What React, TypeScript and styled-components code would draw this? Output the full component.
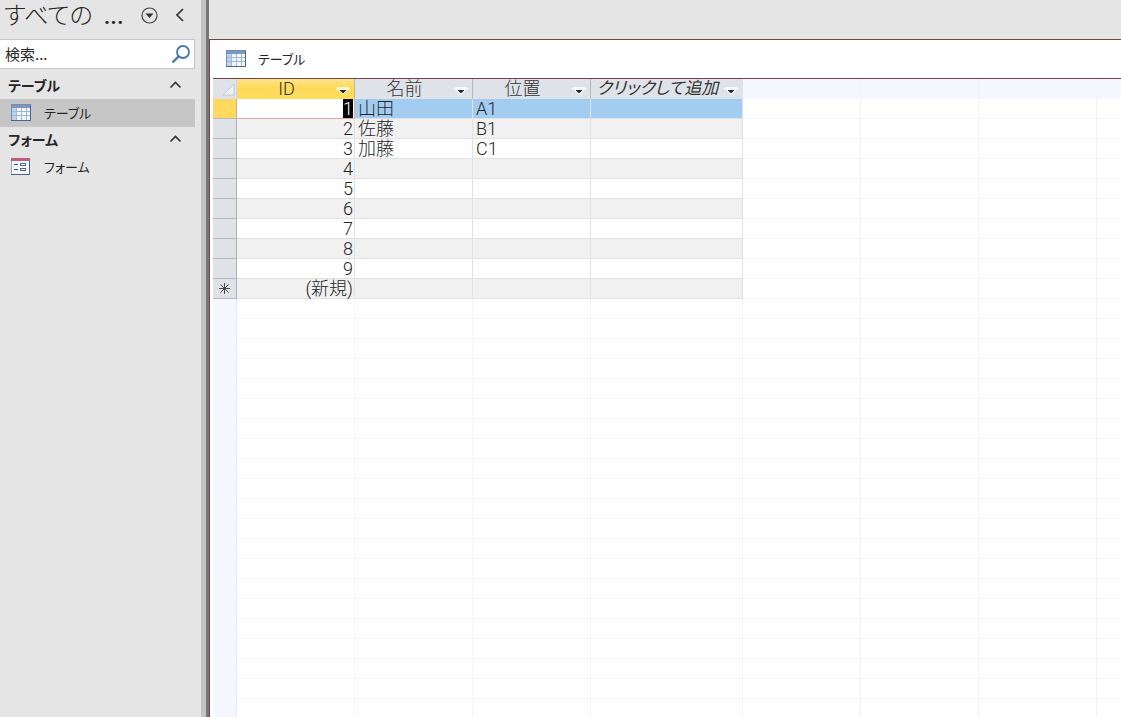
import React from "react";
import styled, { createGlobalStyle, css } from "styled-components";

const uiFont = `"Noto Sans CJK JP", sans-serif`;
const gridFont = `Roboto, "Noto Sans CJK JP", sans-serif`;

const GlobalStyle = createGlobalStyle`
  * { box-sizing: border-box; }
  body {
    margin: 0;
    background: #e5e5e5;
    color: #262626;
    font-family: ${uiFont};
    font-feature-settings: "palt";
  }
  button {
    border: 0;
    padding: 0;
    background: none;
    color: inherit;
    font: inherit;
    font-feature-settings: inherit;
    cursor: pointer;
  }
`;

const Window = styled.div`
  display: flex;
  height: 100vh;
  overflow: hidden;
`;

const Navigation = styled.nav`
  display: flex;
  flex-direction: column;
  flex: none;
  width: 201px;
  padding-right: 6px;
`;

const Splitter = styled.div`
  flex: none;
  width: 8px;
  background: #c3c3c3;
  border-right: 3px solid #777777;
`;

const NavHeader = styled.header`
  display: flex;
  align-items: flex-start;
  height: 39px;
  padding: 0 3px 0 4px;
`;

const NavTitle = styled.h1`
  flex: 1;
  margin: 0;
  font-family: ${gridFont};
  font-size: 24px;
  line-height: 33px;
  font-weight: 300;
  white-space: nowrap;
`;

const Ellipsis = styled.span`
  margin-left: 5px;
  font-weight: 500;
`;

const IconButton = styled.button`
  display: flex;
  align-items: center;
  justify-content: center;
  width: 24px;
  height: 24px;
  margin: 3px 0 0 7px;
`;

const SearchBox = styled.form`
  display: flex;
  align-items: center;
  height: 30px;
  margin-bottom: 4px;
  padding: 0 3px 0 5px;
  background: #ffffff;
  border: 1px solid #c6c6c6;
  border-left: 0;
`;

const SearchInput = styled.input`
  flex: 1;
  min-width: 0;
  padding: 0 0 2px;
  border: 0;
  outline: 0;
  background: none;
  color: #262626;
  font-family: ${uiFont};
  font-size: 15px;
  &::placeholder {
    color: #262626;
    opacity: 1;
  }
`;

const SearchButton = styled.button`
  display: flex;
`;

const GroupHeader = styled.button`
  display: flex;
  align-items: center;
  justify-content: space-between;
  height: 26px;
  padding: 0 13px 2px 8px;
  font-size: 14px;
  font-weight: 700;
`;

const NavItem = styled.a<{ $selected?: boolean }>`
  display: flex;
  align-items: center;
  gap: 13px;
  height: 28px;
  padding: 0 11px 1px;
  background: ${(p) => (p.$selected ? "#c6c6c6" : "transparent")};
  color: inherit;
  font-size: 13px;
  text-decoration: none;
`;

const Workspace = styled.main`
  display: flex;
  flex: 1;
  min-width: 0;
  padding-top: 39px;
`;

const Document = styled.section`
  display: flex;
  flex-direction: column;
  flex: 1;
  min-width: 0;
  padding-left: 3px;
  background: #ffffff;
  border-top: 1px solid #7c4347;
  border-left: 1px solid #7c4347;
`;

const DocumentTab = styled.h2`
  display: flex;
  align-items: center;
  flex: none;
  gap: 12px;
  height: 39px;
  margin: 0;
  padding: 0 0 2px 13px;
  border-bottom: 1px solid #7c4347;
  font-size: 13px;
  font-weight: 400;
`;

const Sheet = styled.div`
  display: flex;
  flex: 1;
  min-height: 0;
  overflow: hidden;
`;

const Records = styled.div`
  display: flex;
  flex-direction: column;
  flex: none;
  width: 530px;
`;

const Grid = styled.table`
  flex: none;
  width: 100%;
  table-layout: fixed;
  border-collapse: separate;
  border-spacing: 0;
  font-family: ${gridFont};
  font-size: 18px;
  line-height: 19px;
  font-weight: 300;
`;

const Column = styled.col<{ $width: number }>`
  width: ${(p) => p.$width}px;
`;

const HeaderCell = styled.th<{ $active?: boolean; $italic?: boolean }>`
  height: 20px;
  padding: 0;
  border-right: 1px solid #b4b9c0;
  background: ${(p) =>
    p.$active ? "linear-gradient(#ffe48c, #ffda58 45%, #ffdb62)" : "#dfe2e7"};
  color: #333333;
  font-weight: ${(p) => (p.$italic ? 400 : 300)};
  font-style: ${(p) => (p.$italic ? "italic" : "normal")};
  font-size: ${(p) => (p.$italic ? 17 : 18)}px;
  &:last-child { border-right-color: #dfe2e7; }
`;

const HeaderContent = styled.div`
  display: flex;
  align-items: flex-start;
  height: 20px;
  padding-right: 4px;
`;

const HeaderLabel = styled.span`
  flex: 1;
  text-align: center;
  white-space: nowrap;
`;

const MenuButton = styled.button`
  display: flex;
  flex: none;
  align-self: flex-end;
  padding-bottom: 5px;
`;

const Corner = styled.td`
  padding: 0 1px 3px 0;
  background: #dfe2e7;
  border-right: 1px solid #d3d6dc;
  text-align: right;
  vertical-align: bottom;
  line-height: 0;
`;

const RowSelector = styled.th<{ $active?: boolean }>`
  height: 20px;
  padding: 0;
  border-right: 1px solid #aeb3ba;
  border-bottom: 1px solid #b4b9c0;
  background: ${(p) => (p.$active ? "#ffd95f" : "#dfe2e7")};
  line-height: 0;
`;

const Cell = styled.td<{ $number?: boolean; $editing?: boolean }>`
  height: 20px;
  padding: 0 1px 0 3px;
  border-right: 1px solid #e0e2e4;
  border-bottom: 1px solid #e0e2e4;
  text-align: ${(p) => (p.$number ? "right" : "left")};
  white-space: nowrap;
  ${(p) =>
    p.$editing &&
    css`
      background: #ffffff;
      border-color: #e8a5a5;
      color: #ffffff;
    `}
`;

const SelectedText = styled.span`
  display: block;
  width: min-content;
  margin-left: auto;
  background: #000000;
`;

const Row = styled.tr<{ $shaded?: boolean; $active?: boolean }>`
  background: ${(p) => (p.$active ? "#a3cdf0" : p.$shaded ? "#f1f1f1" : "#ffffff")};
`;

const rowLines = css`
  background-image: repeating-linear-gradient(
    transparent 0 19px,
    #f5f5f7 19px 20px
  );
`;

const EmptyRows = styled.div`
  display: grid;
  grid-template-columns: 24px 118px 118px 118px 1fr;
  flex: 1;
`;

const EmptyColumn = styled.div<{ $gutter?: boolean }>`
  border-right: 1px solid ${(p) => (p.$gutter ? "#e6e8f0" : "#f5f5f7")};
  background-color: ${(p) => (p.$gutter ? "#f6f7fe" : "#ffffff")};
  ${rowLines}
`;

const EmptyColumns = styled.div`
  display: flex;
  flex-direction: column;
  flex: 1;
  min-width: 0;
`;

const columnLines = `repeating-linear-gradient(to right, transparent 0 117px, #f3f3f6 117px 118px)`;

const EmptyHeader = styled.div`
  flex: none;
  height: 20px;
  background: ${columnLines}, #f6f7fe;
`;

const EmptyCells = styled.div`
  flex: 1;
  background: ${columnLines},
    repeating-linear-gradient(transparent 0 19px, #f5f5f7 19px 20px);
`;

const TableIcon = () => (
  <svg width="20" height="17" viewBox="0 0 20 17" aria-hidden="true">
    <rect x="0.5" y="0.5" width="19" height="16" fill="#f4f8fd" stroke="#6f8fb8" />
    <rect x="1" y="1" width="18" height="3" fill="#7f96bb" />
    <rect x="1" y="4" width="4" height="12" fill="#bdd2ec" />
    <path d="M1 7.500H19M1 11.500H19M5.500 4V16M10.500 4V16M15.500 4V16" stroke="#9db8dc" fill="none" />
    <path d="M0 16.500H19.500V1" stroke="#4c648c" fill="none" />
  </svg>
);

const FormIcon = () => (
  <svg width="20" height="17" viewBox="0 0 20 17" aria-hidden="true">
    <rect x="0.5" y="0.5" width="18" height="16" fill="#f5f9fe" stroke="#8fa5c9" />
    <rect x="0" y="0" width="19" height="3" fill="#c15c80" />
    <path d="M3 6.500H7M3 11.500H7" stroke="#35507c" fill="none" />
    <rect x="9.500" y="5.500" width="5" height="2" fill="#fff" stroke="#4b6799" />
    <rect x="9.500" y="10.500" width="5" height="2" fill="#fff" stroke="#4b6799" />
    <path d="M0 16.500H18.500V3" stroke="#4c648c" fill="none" />
  </svg>
);

const ChevronUp = () => (
  <svg width="13" height="8" viewBox="0 0 13 8" aria-hidden="true">
    <path d="M1.500 6.500L6.500 1.500L11.500 6.500" fill="none" stroke="#333" strokeWidth="1.600" />
  </svg>
);

const MenuArrow = () => (
  <svg width="14" height="7" viewBox="0 0 14 7" aria-hidden="true">
    <path d="M1 0H13V1H14V3H11V5H9V7H5V5H3V3H0V1H1Z" fill="#fff" opacity="0.750" />
    <path d="M4 3H10V4H9V5H8V6H6V5H5V4H4Z" fill="#2b2b2b" />
  </svg>
);

const NewRecordIcon = () => (
  <svg width="11" height="11" viewBox="0 0 11 11" aria-hidden="true">
    <path d="M5.500 0V11M0 5.500H11M1.500 1.500L9.500 9.500M9.500 1.500L1.500 9.500" stroke="#4a4a4a" fill="none" />
  </svg>
);

const fields = [
  { label: "ID", active: true },
  { label: "名前" },
  { label: "位置" },
  { label: "クリックして追加", italic: true },
];

const records = [
  ["1", "山田", "A1"],
  ["2", "佐藤", "B1"],
  ["3", "加藤", "C1"],
  ["4", "", ""],
  ["5", "", ""],
  ["6", "", ""],
  ["7", "", ""],
  ["8", "", ""],
  ["9", "", ""],
];

const groups = [
  { label: "テーブル", icon: <TableIcon />, selected: true },
  { label: "フォーム", icon: <FormIcon />, selected: false },
];

function NavigationPane() {
  return (
    <Navigation>
      <NavHeader>
        <NavTitle>
          すべての <Ellipsis>...</Ellipsis>
        </NavTitle>
        <IconButton aria-label="メニュー">
          <svg width="17" height="17" viewBox="0 0 17 17" aria-hidden="true">
            <circle cx="8.500" cy="8.500" r="7.500" fill="none" stroke="#444" strokeWidth="1.200" />
            <path d="M4.500 6.500H12.500L8.500 11Z" fill="#333" />
          </svg>
        </IconButton>
        <IconButton aria-label="閉じる">
          <svg width="10" height="14" viewBox="0 0 10 14" aria-hidden="true">
            <path d="M8 1L2 7L8 13" fill="none" stroke="#333" strokeWidth="1.700" />
          </svg>
        </IconButton>
      </NavHeader>
      <SearchBox role="search">
        <SearchInput type="text" placeholder="検索..." aria-label="検索" />
        <SearchButton type="button" aria-label="検索を実行">
          <svg width="20" height="20" viewBox="0 0 20 20" aria-hidden="true">
            <circle cx="12" cy="8" r="6" fill="none" stroke="#4778ab" strokeWidth="1.800" />
            <path d="M7.500 12.500L1.500 18.500" stroke="#4778ab" strokeWidth="2.400" />
          </svg>
        </SearchButton>
      </SearchBox>
      {groups.map((group) => (
        <React.Fragment key={group.label}>
          <GroupHeader aria-expanded="true">
            {group.label}
            <ChevronUp />
          </GroupHeader>
          <NavItem href="#" $selected={group.selected}>
            {group.icon}
            {group.label}
          </NavItem>
        </React.Fragment>
      ))}
    </Navigation>
  );
}

function Datasheet() {
  return (
    <Grid>
      <colgroup>
        <Column $width={24} />
        <Column $width={118} />
        <Column $width={118} />
        <Column $width={118} />
        <Column $width={152} />
      </colgroup>
      <thead>
        <tr>
          <Corner>
            <svg width="13" height="13" viewBox="0 0 13 13" aria-hidden="true">
              <path d="M12 1V12H1Z" fill="#eef0f4" stroke="#c6cad1" />
            </svg>
          </Corner>
          {fields.map((field) => (
            <HeaderCell key={field.label} scope="col" $active={field.active} $italic={field.italic}>
              <HeaderContent>
                <HeaderLabel>{field.label}</HeaderLabel>
                <MenuButton aria-label={`${field.label} メニュー`}>
                  <MenuArrow />
                </MenuButton>
              </HeaderContent>
            </HeaderCell>
          ))}
        </tr>
      </thead>
      <tbody>
        {records.map(([id, name, place], index) => (
          <Row key={id} $active={index === 0} $shaded={index % 2 === 1}>
            <RowSelector scope="row" $active={index === 0} />
            <Cell $number $editing={index === 0}>
              {index === 0 ? <SelectedText>{id}</SelectedText> : id}
            </Cell>
            <Cell>{name}</Cell>
            <Cell>{place}</Cell>
            <Cell />
          </Row>
        ))}
        <Row $shaded>
          <RowSelector scope="row">
            <NewRecordIcon />
          </RowSelector>
          <Cell $number>(新規)</Cell>
          <Cell />
          <Cell />
          <Cell />
        </Row>
      </tbody>
    </Grid>
  );
}

export default function App() {
  return (
    <Window>
      <GlobalStyle />
      <NavigationPane />
      <Splitter />
      <Workspace>
        <Document>
          <DocumentTab>
            <TableIcon />
            テーブル
          </DocumentTab>
          <Sheet>
            <Records>
              <Datasheet />
              <EmptyRows>
                <EmptyColumn $gutter />
                <EmptyColumn />
                <EmptyColumn />
                <EmptyColumn />
                <EmptyColumn />
              </EmptyRows>
            </Records>
            <EmptyColumns>
              <EmptyHeader />
              <EmptyCells />
            </EmptyColumns>
          </Sheet>
        </Document>
      </Workspace>
    </Window>
  );
}
